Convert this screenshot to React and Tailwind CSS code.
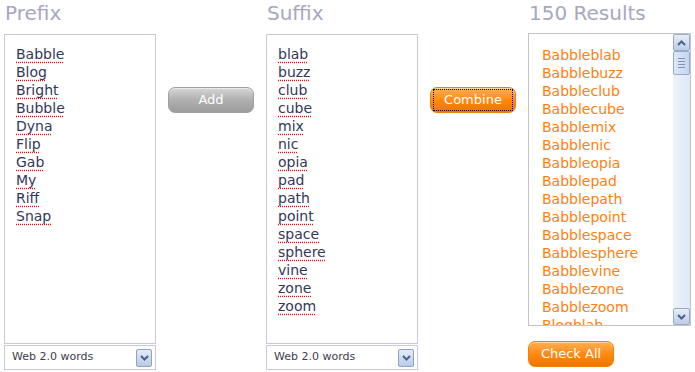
import React from 'react';

const prefixes = ['Babble', 'Blog', 'Bright', 'Bubble', 'Dyna', 'Flip', 'Gab', 'My', 'Riff', 'Snap'];
const suffixes = ['blab', 'buzz', 'club', 'cube', 'mix', 'nic', 'opia', 'pad', 'path', 'point', 'space', 'sphere', 'vine', 'zone', 'zoom'];
const results = prefixes.flatMap((p) => suffixes.map((s) => p + s));

const font = { fontFamily: '"DejaVu Sans", Verdana, sans-serif' };

const Heading = ({ children }) => (
  <div className="h-[33px] pt-[1px] text-[20px] leading-[24px] text-[#a7a7bf] pl-[1px]">{children}</div>
);

const WordBox = ({ words }) => (
  <div className="w-[152px]">
    <div className="h-[310px] mt-[1px] border border-[#c9c8dd] bg-white pt-[10px] pl-[11px]">
      {words.map((w) => (
        <div key={w} className="text-[14px] leading-[18px] text-[#33375a]">
          <span className="underline decoration-dotted decoration-[#e01010] underline-offset-[3px]">{w}</span>
        </div>
      ))}
    </div>
    <div className="mt-[1px] h-[25px] border border-[#c9c8dd] bg-white flex items-center justify-between pl-[7px] pr-[3px]">
      <span className="text-[11px] text-[#3d3d4d]">Web 2.0 words</span>
      <span className="w-[16px] h-[18px] border border-[#8ea4c4] rounded-[2px] bg-gradient-to-b from-[#e4ecf8] to-[#b8cbe8] flex items-center justify-center">
        <svg width="9" height="6" viewBox="0 0 9 6">
          <path d="M1 1 L4.5 4.5 L8 1" stroke="#4d6185" strokeWidth="2" fill="none" />
        </svg>
      </span>
    </div>
  </div>
);

const Button = ({ children, tone, focus }) => (
  <div
    className={
      'w-[86px] h-[26px] rounded-[7px] flex items-center justify-center text-[13px] text-white shadow-[inset_0_1px_0_rgba(255,255,255,0.5)] ' +
      (tone === 'gray'
        ? 'bg-gradient-to-b from-[#d6d6d6] via-[#b0b0b0] to-[#9c9c9c] border border-[#a0a0a0]'
        : 'bg-gradient-to-b from-[#ffb04a] via-[#ff8a10] to-[#f07400] border border-[#f08000]')
    }
  >
    <span className={focus ? 'w-[80px] h-[22px] border border-dotted border-black flex items-center justify-center' : ''}>
      {children}
    </span>
  </div>
);

export default function App() {
  return (
    <div className="w-[695px] h-[372px] bg-white overflow-hidden flex pl-[4px]" style={font}>
      <div>
        <Heading>Prefix</Heading>
        <WordBox words={prefixes} />
      </div>
      <div className="ml-[12px] pt-[87px]">
        <Button tone="gray">Add</Button>
      </div>
      <div className="ml-[12px]">
        <Heading>Suffix</Heading>
        <WordBox words={suffixes} />
      </div>
      <div className="ml-[12px] pt-[87px]">
        <Button tone="orange" focus>Combine</Button>
      </div>
      <div className="ml-[12px]">
        <Heading>150 Results</Heading>
        <div className="w-[163px] h-[293px] border border-[#c4c4c4] bg-white flex overflow-hidden">
          <div className="flex-1 pt-[12px] pl-[13px] overflow-hidden">
            {results.map((r) => (
              <div key={r} className="text-[14px] leading-[18px] text-[#ff7f10] whitespace-nowrap">{r}</div>
            ))}
          </div>
          <div className="w-[17px] flex flex-col bg-gradient-to-r from-[#eef3fc] to-[#dfe8f8]">
            <div className="h-[17px] border border-[#98acc8] rounded-[2px] bg-gradient-to-b from-[#e8eef9] to-[#bccde8] flex items-center justify-center">
              <svg width="9" height="6" viewBox="0 0 9 6">
                <path d="M1 5 L4.5 1.5 L8 5" stroke="#4d6185" strokeWidth="2" fill="none" />
              </svg>
            </div>
            <div className="h-[24px] border border-[#98acc8] rounded-[2px] bg-gradient-to-r from-[#dde7f7] to-[#c5d5ef] flex flex-col items-center justify-center gap-[2px]">
              <div className="w-[7px] h-[1px] bg-[#8094b4]" />
              <div className="w-[7px] h-[1px] bg-[#8094b4]" />
              <div className="w-[7px] h-[1px] bg-[#8094b4]" />
              <div className="w-[7px] h-[1px] bg-[#8094b4]" />
            </div>
            <div className="flex-1" />
            <div className="h-[17px] border border-[#98acc8] rounded-[2px] bg-gradient-to-b from-[#e8eef9] to-[#bccde8] flex items-center justify-center">
              <svg width="9" height="6" viewBox="0 0 9 6">
                <path d="M1 1 L4.5 4.5 L8 1" stroke="#4d6185" strokeWidth="2" fill="none" />
              </svg>
            </div>
          </div>
        </div>
        <div className="mt-[15px]">
          <Button tone="orange">Check All</Button>
        </div>
      </div>
    </div>
  );
}
